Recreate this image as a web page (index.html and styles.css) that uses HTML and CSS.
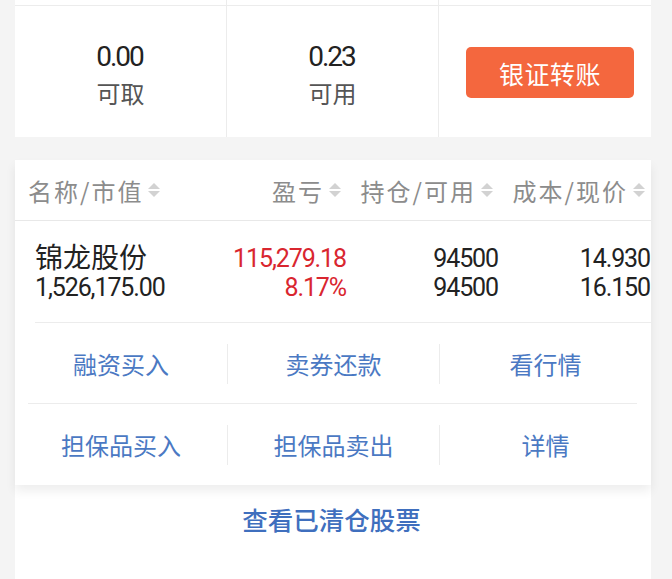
FILE: index.html
```html
<!DOCTYPE html>
<html lang="zh-CN">
<head>
<meta charset="utf-8">
<title>持仓</title>
<link rel="stylesheet" href="styles.css">
</head>
<body>
<div class="page">
  <section class="summary">
    <div class="summary-prev">
      <div class="cell"></div><div class="cell"></div><div class="cell last"></div>
    </div>
    <div class="summary-main">
      <div class="cell">
        <div class="num">0.00</div>
        <div class="label">可取</div>
      </div>
      <div class="cell">
        <div class="num">0.23</div>
        <div class="label">可用</div>
      </div>
      <div class="cell last">
        <button class="transfer">银证转账</button>
      </div>
    </div>
  </section>

  <div class="gap"></div>

  <section class="card">
    <div class="thead">
      <div class="th th-left">名称/市值<span class="sort"></span></div>
      <div class="th th-pl">盈亏<span class="sort"></span></div>
      <div class="th th-hold">持仓/可用<span class="sort"></span></div>
      <div class="th">成本/现价<span class="sort"></span></div>
    </div>
    <div class="row">
      <div class="td td-left">
        <div class="name">锦龙股份</div>
        <div class="val">1,526,175.00</div>
      </div>
      <div class="td red">
        <div class="val">115,279.18</div>
        <div class="val">8.17%</div>
      </div>
      <div class="td">
        <div class="val">94500</div>
        <div class="val">94500</div>
      </div>
      <div class="td">
        <div class="val">14.930</div>
        <div class="val">16.150</div>
      </div>
    </div>
    <div class="actions">
      <div class="action-row sep">
        <a class="act">融资买入</a>
        <a class="act">卖券还款</a>
        <a class="act">看行情</a>
      </div>
      <div class="action-row">
        <a class="act">担保品买入</a>
        <a class="act">担保品卖出</a>
        <a class="act">详情</a>
      </div>
    </div>
  </section>

  <div class="footer">
    <a class="cleared">查看已清仓股票</a>
  </div>
</div>
</body>
</html>
```

FILE: styles.css
```css
* { box-sizing: border-box; }
html, body {
  margin: 0;
  padding: 0;
  background: #f4f4f4;
  height: 100%;
  overflow: hidden;
}
body {
  font-family: "Noto Sans CJK SC", "Noto Sans", sans-serif;
}
.page {
  margin-left: 15px;
  width: 636px;
  min-height: 100%;
  display: flex;
  flex-direction: column;
}
.summary { background: #fff; }
.summary-prev {
  display: grid;
  grid-template-columns: 212px 212px 212px;
  height: 6px;
  border-bottom: 1px solid #ececec;
}
.summary-main {
  display: grid;
  grid-template-columns: 212px 212px 212px;
  height: 131px;
}
.cell {
  border-right: 1px solid #ececec;
  display: flex;
  flex-direction: column;
  align-items: center;
  justify-content: center;
}
.cell.last { border-right: none; }
.num {
  font-family: Roboto, "Liberation Sans", sans-serif;
  font-size: 28px;
  line-height: 34px;
  letter-spacing: -2px;
  color: #222;
  margin-top: 9px;
  padding-right: 2px;
}
.label {
  font-size: 24px;
  line-height: 38px;
  color: #555;
}
.transfer {
  width: 168px;
  height: 51px;
  margin-left: 10px;
  margin-top: 2px;
  border: none;
  border-radius: 5px;
  background: #f4673e;
  color: #fff;
  font-family: "Noto Sans CJK SC", sans-serif;
  font-size: 25px;
  letter-spacing: 0.5px;
  padding: 0;
}
.gap { height: 23px; }
.card {
  background: #fff;
  box-shadow: 0 6px 10px rgba(0, 0, 0, 0.07);
  position: relative;
  z-index: 1;
  overflow: hidden;
}
.thead {
  display: grid;
  grid-template-columns: 210px 118px 155px 153px;
  height: 61px;
  border-bottom: 1px solid #e8e8e8;
  align-items: center;
}
.th {
  font-size: 24px;
  color: #8c8c8c;
  display: flex;
  align-items: center;
  justify-content: flex-end;
  padding-right: 3px;
  white-space: nowrap;
  letter-spacing: 2px;
}
.th.th-pl { padding-right: 1px; }
.th.th-hold { padding-right: 4px; }
.th:last-child { padding-right: 5px; }
.th-left { justify-content: flex-start; padding-left: 13px; }
.sort {
  display: inline-block;
  width: 13px;
  height: 16px;
  margin-left: 5px;
  position: relative;
}
.sort::before, .sort::after {
  content: "";
  position: absolute;
  left: 0;
  border-left: 6.5px solid transparent;
  border-right: 6.5px solid transparent;
}
.sort::before { top: 1px; border-bottom: 6px solid #d2d2d2; }
.sort::after { bottom: 1px; border-top: 6px solid #d2d2d2; }
.row {
  display: grid;
  grid-template-columns: 212px 119px 152px 153px;
  height: 102px;
  align-items: center;
  position: relative;
}
.row::after {
  content: "";
  position: absolute;
  left: 20px;
  right: 0;
  bottom: 0;
  border-bottom: 1px solid #ececec;
}
.td {
  text-align: right;
  color: #222;
  padding-top: 1px;
}
.td:last-child { padding-right: 1px; }
.td-left { text-align: left; padding-left: 20px; }
.name {
  font-size: 28px;
  line-height: 30px;
  color: #222;
  margin-top: -3px;
  margin-bottom: 2px;
}
.val {
  font-family: Roboto, "Liberation Sans", sans-serif;
  font-size: 25px;
  line-height: 29px;
  letter-spacing: -1.1px;
  white-space: nowrap;
}
.red { color: #d9262f; }
.action-row {
  display: grid;
  grid-template-columns: 212px 212px 212px;
  height: 81px;
  align-items: center;
  position: relative;
}
.action-row.sep::after {
  content: "";
  position: absolute;
  left: 13px;
  width: 609px;
  bottom: 0;
  border-bottom: 1px solid #ececec;
}
.act {
  display: flex;
  align-items: center;
  justify-content: center;
  height: 40px;
  font-size: 24px;
  color: #4b79c3;
  border-left: 1px solid #ececec;
}
.act:first-child { border-left: none; }
.footer {
  flex: 1;
  background: #fff;
  text-align: center;
  padding-top: 16px;
}
.cleared {
  font-size: 25.5px;
  line-height: 36px;
  color: #3f6fbe;
  font-weight: 500;
  padding-right: 3px;
}
```
